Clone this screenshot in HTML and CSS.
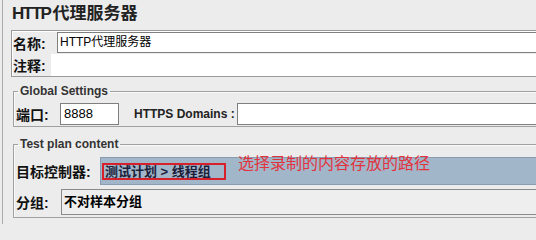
FILE: index.html
```html
<!DOCTYPE html>
<html>
<head>
<meta charset="utf-8">
<link rel="stylesheet" href="styles.css">
</head>
<body>
<div class="page">
  <h1 class="title"><span class="latin">HTTP</span>代理服务器</h1>
  <div class="name-panel">
    <div class="row name-row">
      <span class="label name-label">名称:</span>
      <div class="text-input wide">HTTP代理服务器</div>
    </div>
    <div class="row comment-row">
      <span class="label comment-label">注释:</span>
      <div class="comment-area"></div>
    </div>
  </div>
  <fieldset class="group global">
    <legend>Global Settings</legend>
    <div class="row port-row">
      <span class="label port-label">端口:</span>
      <div class="text-input port">8888</div>
      <span class="label https-label">HTTPS Domains :</span>
      <div class="text-input wide"></div>
    </div>
  </fieldset>
  <fieldset class="group testplan">
    <legend>Test plan content</legend>
    <div class="row target-row">
      <span class="label target-label">目标控制器:</span>
      <div class="target-box"><span class="target-value">测试计划 &gt; 线程组</span></div>
    </div>
    <div class="row group-row">
      <span class="label group-label">分组:</span>
      <div class="select-box">不对样本分组</div>
    </div>
    <div class="annotation">选择录制的内容存放的路径</div>
  </fieldset>
</div>
</body>
</html>
```
FILE: styles.css
```css
html, body {
  margin: 0;
  padding: 0;
  background: #ececec;
  overflow: hidden;
  width: 536px;
  height: 224px;
}
body {
  font-family: "Liberation Sans", "Noto Sans CJK SC", sans-serif;
  color: #000;
}
.page {
  margin-left: 2px;
  border-left: 1px solid #aaaaaa;
  padding-left: 8px;
  height: 224px;
  box-sizing: border-box;
}
.title {
  margin: 0;
  height: 30px;
  line-height: 28px;
  font-size: 17px;
  font-weight: bold;
  color: #222;
  padding-left: 1px;
}
.title .latin {
  letter-spacing: -1.5px;
  margin-right: 2px;
}
.row {
  display: flex;
  align-items: center;
}
.label {
  font-size: 14px;
  font-weight: bold;
  white-space: nowrap;
  color: #111;
}
.name-panel {
  margin-right: -20px;
  height: 47px;
  box-sizing: border-box;
  border: 1px solid #9a9a9a;
  box-shadow: inset 1px 1px 0 #ffffff;
  padding-top: 1px;
}
.text-input {
  background: #fff;
  border: 1px solid #7f7f7f;
  box-sizing: border-box;
  height: 21px;
  font-size: 12px;
  line-height: 19px;
  padding-left: 2px;
  white-space: nowrap;
}
.wide {
  flex: 1;
}
.name-label {
  width: 45px;
  padding-left: 1px;
  box-sizing: border-box;
}
.name-row {
  height: 21px;
}
.comment-row {
  margin-top: 1px;
  height: 22px;
}
.comment-label {
  width: 39px;
  padding-left: 1px;
  box-sizing: border-box;
}
.comment-area {
  flex: 1;
  height: 22px;
  background: #fff;
}
.group {
  margin: 7px -20px 0 2px;
  padding: 0 0 0 2px;
  border: 1px solid #a0a0a0;
  box-shadow: inset 1px 1px 0 #fafafa;
  min-width: 0;
}
.group legend {
  margin-left: 2px;
  padding: 0 2px;
  font-size: 12px;
  line-height: 14px;
  font-weight: bold;
  color: #333;
}
.global {
  padding-bottom: 1px;
}
.port-row {
  margin-top: 5px;
  height: 22px;
}
.port-label {
  width: 44px;
}
.text-input.port {
  width: 59px;
  height: 22px;
  padding-left: 3px;
  font-size: 13px;
}
.https-label {
  font-size: 12px;
  margin-left: 15px;
  margin-right: 2px;
  color: #222;
}
.global .text-input.wide {
  height: 22px;
}
.testplan {
  margin-top: 10px;
  padding-bottom: 2px;
  position: relative;
}
.target-row {
  margin-top: 6px;
  height: 28px;
}
.target-label {
  width: 84px;
}
.target-box {
  flex: 1;
  height: 28px;
  box-sizing: border-box;
  background: #a2b6ca;
  border: 1px solid #8b9cb0;
  display: flex;
  align-items: center;
  padding-left: 1px;
}
.target-value {
  display: inline-block;
  width: 124px;
  height: 17px;
  box-sizing: border-box;
  border: 2px solid #d8202a;
  font-size: 13px;
  font-weight: bold;
  line-height: 13px;
  color: #1c1e3a;
  padding-left: 1px;
  white-space: nowrap;
}
.group-row {
  margin-top: 4px;
  height: 26px;
}
.group-label {
  width: 45px;
}
.select-box {
  flex: 1;
  height: 26px;
  box-sizing: border-box;
  border: 1px solid #8a8a8a;
  background: #eeeeee;
  font-size: 13px;
  font-weight: bold;
  line-height: 24px;
  padding-left: 2px;
}
.annotation {
  position: absolute;
  left: 224px;
  top: 4px;
  font-size: 16px;
  line-height: 18px;
  color: #e2333d;
  white-space: nowrap;
}
```
